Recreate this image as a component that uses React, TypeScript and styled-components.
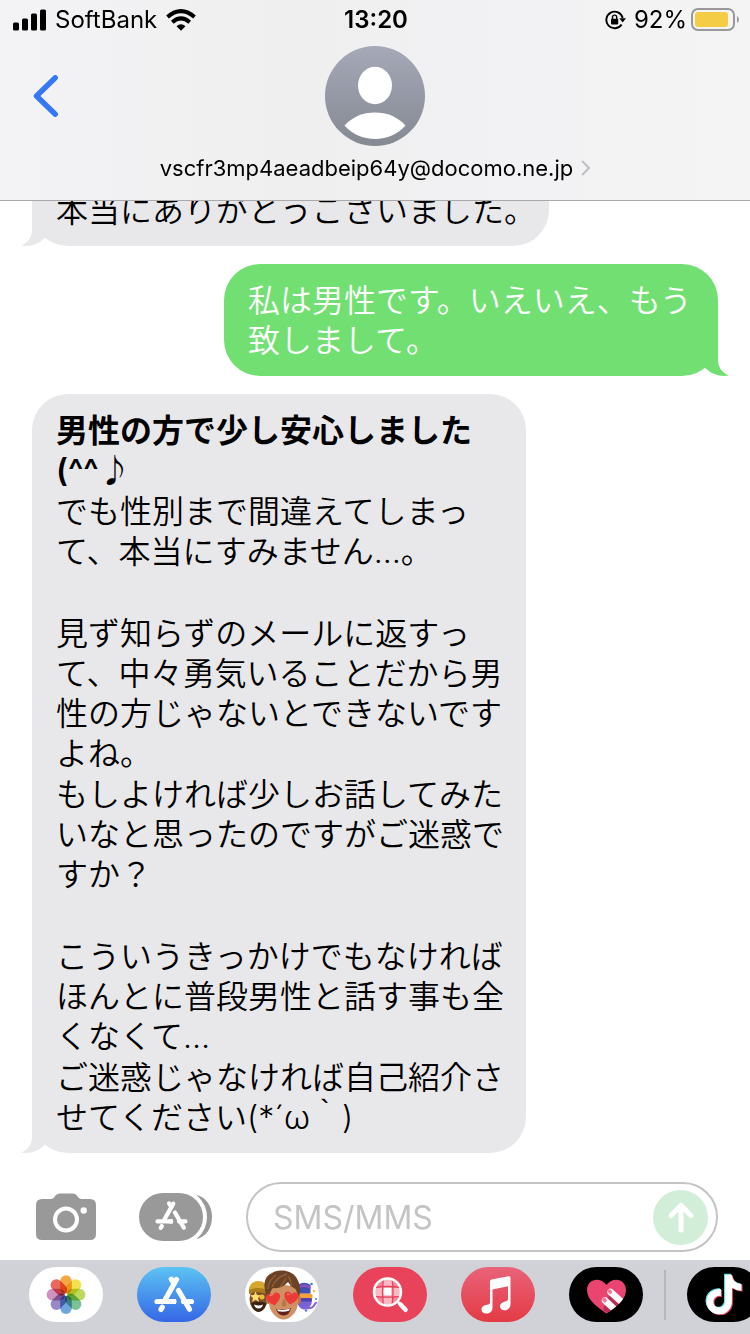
import React from 'react';
import styled, { createGlobalStyle } from 'styled-components';
import { FaTiktok } from 'react-icons/fa';

const GlobalStyle = createGlobalStyle`
  *, *::before, *::after { box-sizing: border-box; }
  body {
    margin: 0;
    background: #fff;
    color: #000;
    font-family: Inter, "Noto Sans CJK JP", sans-serif;
  }
  button { border: 0; padding: 0; background: none; font: inherit; color: inherit; cursor: pointer; }
  svg { display: block; flex: none; }
`;

const Screen = styled.div`
  display: flex;
  flex-direction: column;
  height: 100vh;
  overflow: hidden;
`;

const Header = styled.header`
  flex: none;
  height: 201px;
  border-bottom: 1px solid #a9a9ab;
  background: linear-gradient(90deg, #f3f3f5, #efeff0 40%, #f2f2f4 70%, #f4f4f4);
`;

const StatusBar = styled.div`
  display: grid;
  grid-template-columns: 1fr auto 1fr;
  align-items: center;
  height: 40px;
  padding: 0 11px 0 13px;
  font-size: 24px;
  line-height: 40px;
`;

const StatusGroup = styled.div<{ $end?: boolean }>`
  display: flex;
  align-items: center;
  justify-content: ${(p) => (p.$end ? 'flex-end' : 'flex-start')};
  gap: ${(p) => (p.$end ? 4 : 9)}px;
`;

const Clock = styled.time`
  font-weight: 600;
`;

const LockIcon = styled.svg`
  margin-right: 4px;
`;

const ContactBar = styled.div`
  display: grid;
  grid-template-columns: 1fr auto 1fr;
  align-items: start;
  padding: 6px 33px 0;
`;

const BackButton = styled.button`
  justify-self: start;
  margin-top: 29px;
`;

const Contact = styled.button`
  display: flex;
  flex-direction: column;
  align-items: center;
  gap: 7px;
`;

const ContactName = styled.span`
  display: flex;
  align-items: center;
  gap: 8px;
  font-size: 22px;
  line-height: 30px;
`;

const Thread = styled.main`
  flex: 1;
  min-height: 0;
  overflow: hidden;
  display: flex;
  flex-direction: column;
  justify-content: flex-end;
  gap: 18px;
  padding: 0 32px 29px;
`;

const Bubble = styled.article<{ $sent?: boolean; $wide?: boolean }>`
  position: relative;
  flex: none;
  display: flex;
  flex-direction: column;
  gap: 1px;
  align-self: ${(p) => (p.$sent ? 'flex-end' : 'flex-start')};
  max-width: ${(p) => (p.$wide ? 517 : 494)}px;
  padding: 17px ${(p) => (p.$wide ? 13 : 22)}px 15px 24px;
  border-radius: ${(p) => (p.$wide ? '0 0 36px 36px' : '36px')};
  background: ${(p) => (p.$sent ? '#72df73' : '#e8e8ea')};
  color: ${(p) => (p.$sent ? '#fff' : '#000')};
  font-size: 32px;
  font-weight: 350;
  line-height: 40px;
`;

const Line = styled.p<{ $bold?: boolean }>`
  margin: 0;
  min-height: 40px;
  font-weight: ${(p) => (p.$bold ? 600 : 'inherit')};
`;

const TailShape = styled.svg<{ $sent?: boolean }>`
  position: absolute;
  bottom: 0;
  ${(p) => (p.$sent ? 'right: -11px; transform: scaleX(-1);' : 'left: -11px;')}
  fill: ${(p) => (p.$sent ? '#72df73' : '#e8e8ea')};
`;

const Composer = styled.form`
  flex: none;
  display: flex;
  align-items: center;
  padding: 0 32px 8px 36px;
`;

const CameraButton = styled.button`
  margin-right: 43px;
`;

const AppsButton = styled.button`
  margin-right: 34px;
`;

const Field = styled.div`
  flex: 1;
  min-width: 0;
  display: flex;
  align-items: center;
  height: 70px;
  padding: 0 8px 0 25px;
  border: 2px solid #c4c4c6;
  border-radius: 35px;
`;

const MessageInput = styled.input`
  flex: 1;
  min-width: 0;
  padding: 0;
  border: 0;
  outline: 0;
  background: none;
  font: inherit;
  font-size: 32px;
  &::placeholder { color: #c4c4c6; opacity: 1; }
`;

const SendButton = styled.button`
  flex: none;
  display: grid;
  place-items: center;
  width: 55px;
  height: 55px;
  border-radius: 50%;
  background: #d3eed8;
`;

const AppStrip = styled.nav`
  flex: none;
  display: flex;
  align-items: center;
  height: 74px;
  padding: 0 0 5px 29px;
  background: #d1d2d8;
  overflow: hidden;
`;

const AppGroup = styled.div`
  flex: none;
  display: flex;
  gap: 34px;
`;

const StripDivider = styled.div`
  flex: none;
  width: 2px;
  height: 50px;
  margin: 0 21px;
  background: #b5b5ba;
`;

const AppPill = styled.button<{ $fill: string }>`
  flex: none;
  width: 74px;
  height: 55px;
  border-radius: 28px;
  background: ${(p) => p.$fill};
  overflow: hidden;
`;

const Tail = ({ sent }: { sent?: boolean }) => (
  <TailShape $sent={sent} width="36" height="36" viewBox="0 0 36 36" aria-hidden="true">
    <path d="M11 0V20C11 27 7 33 0 35.6C9 37 18 34 24 27.7L34 10V0Z" />
  </TailShape>
);

const StoreGlyph = () => (
  <g fill="none" stroke="#fff" strokeWidth="5.2" strokeLinecap="round">
    <path d="M39.5 12.5 28.5 32" />
    <path d="M34.3 12.2 37 16.5" />
    <path d="M41.5 23.5 52.5 42.3" />
    <path d="M20 34.5H37M46.5 34.5H54.5" />
    <path d="M34 34.5H39" strokeLinecap="butt" />
    <path d="M25.3 40.2 24 42.4" />
  </g>
);

const petals = ['#f5a136', '#f0df3c', '#b7d650', '#6fbd8c', '#649fdc', '#8f80c0', '#ca8abb', '#e85a4f'];

const PhotosIcon = () => (
  <svg width="74" height="55" viewBox="0 0 74 55">
    <g style={{ isolation: 'isolate' }}>
      {petals.map((color, i) => (
        <rect
          key={color}
          x="31.2"
          y="8.2"
          width="11.6"
          height="18.6"
          rx="5.8"
          fill={color}
          opacity="0.92"
          transform={`rotate(${i * 45} 37 27.6)`}
          style={{ mixBlendMode: 'multiply' }}
        />
      ))}
    </g>
    <circle cx="37" cy="27.6" r="1.3" fill="#fff" />
  </svg>
);

const heart = 'M0 6.5C-4 3.8-7 1-7-2.2C-7-6.5-1.8-7.4 0-3.6C1.8-7.4 7-6.5 7-2.2C7 1 4 3.8 0 6.5Z';

const MemojiIcon = () => (
  <svg width="74" height="55" viewBox="0 0 74 55">
    <ellipse cx="13.5" cy="32" rx="9" ry="12.5" fill="#7d4f2b" />
    <path d="M6 36Q8 45 14 45Q20 44 21 36Q14 33 6 36Z" fill="#3b2415" />
    <path d="M9 37.5Q14 39.5 18 37.5Q17 41.5 13.5 41.5Q10 41.5 9 37.5Z" fill="#fff" />
    <path d="M4 26C3 18 8 14 13 14C19 14 23 18 22 26Q13 22 4 26Z" fill="#d5a72f" />
    <path d="M4 23Q13 19 22 23V27Q13 23.5 4 27Z" fill="#a97d1c" />
    <path d="M10.5 24.5 12 28 16 28.3 13 31 14 35 10.5 32.8 7 35 8 31 5 28.3 9 28Z" fill="#ffdf6b" />
    <circle cx="17" cy="30" r="2.5" fill="#f0bd3a" />
    <ellipse cx="59.5" cy="33" rx="7.5" ry="9.5" fill="#7763d6" />
    <path d="M53 26V18Q59 13.5 65.5 18V26Z" fill="#3e50b4" />
    <path d="M53 19.5Q59 15 65.5 19.5V22Q59 18 53 22Z" fill="#8c4fc2" />
    <rect x="53" y="26.5" width="14.5" height="6" rx="2.5" fill="#f0a23c" />
    <rect x="55" y="31" width="12" height="3.5" rx="1.5" fill="#5140ad" />
    <path d="M60 41Q67 42 69 38.5T72 36" fill="none" stroke="#8a63d8" strokeWidth="2" />
    <circle cx="66.5" cy="17" r="1.3" fill="#4b7be8" />
    <circle cx="69" cy="24" r="1.3" fill="#f2c644" />
    <circle cx="71" cy="32" r="1" fill="#4b7be8" />
    <circle cx="61" cy="43.5" r="1.2" fill="#4b7be8" />
    <ellipse cx="23.5" cy="33" rx="2.5" ry="4" fill="#b97849" />
    <ellipse cx="53.5" cy="33" rx="2.5" ry="4" fill="#b97849" />
    <path d="M24 22Q38 14 53 22V35C53 45 45 52.5 38.5 52.5C32 52.5 24 45 24 35Z" fill="#cf9063" />
    <path d="M38.5 32Q36 38 37 39.5H41Q42 38 40 32Z" fill="#b87649" />
    <path d="M31 42Q38.5 43.5 46 41Q44.5 48.5 38.5 48.5Q33 48.5 31 42Z" fill="#60201c" />
    <path d="M32 42.3Q38.5 43.8 45.2 41.5L44 43.8Q38.5 45.5 33 44.3Z" fill="#fff" />
    <path d="M22 30C18 20 18 10 27 6C36 1 50 4 53 14C56 19 55.5 25 54 30L50.5 22Q46 20 43 15Q37 22 28 21Q25 24 24.5 30Z" fill="#6b4226" />
    <path d="M27 20Q31 10 42 7M35 20Q39 16 41 11M46 20Q47 14 43 9M22.5 22Q24 13 31 8" fill="none" stroke="#8f5e3b" strokeWidth="1.3" />
    <path d={heart} fill="#ec3a36" transform="translate(28.5 32) rotate(-10)" />
    <path d={heart} fill="#ec3a36" transform="translate(46 31) rotate(8)" />
    <path d="M24.5 28.5Q26 27.3 27 29M42 27.5Q43.5 26.3 44.5 28" fill="none" stroke="#ff8d83" strokeWidth="1.2" />
  </svg>
);

const ImagesIcon = () => (
  <svg width="74" height="55" viewBox="0 0 74 55">
    <circle cx="34.5" cy="25" r="12.5" fill="#f58a9b" />
    <path d="M30.5 20.5H38.5V28.5H30.5Z" fill="#fff" />
    <path d="M30 12.5H39V20H30ZM22 20.5H30V29H22ZM39 21H47V29H39ZM30 29.5H39V37H30Z" fill="#fbb9c3" />
    <g fill="none" stroke="#e9405b" strokeWidth="1.3">
      <path d="M30.3 12Q28.5 25 30.3 38M39 12Q41 25 39 38M22 20.5Q34 18.5 47 20.5M22 29.3Q34 31 47 29.3" />
    </g>
    <circle cx="34.5" cy="25" r="13.5" fill="none" stroke="#fff" strokeWidth="2.5" />
    <path d="M44.5 34.5 48 38" stroke="#fff" strokeWidth="2.5" />
    <path d="M47.5 37.5 52.5 42.8" stroke="#fff" strokeWidth="4.5" strokeLinecap="round" />
  </svg>
);

const MusicIcon = () => (
  <svg width="74" height="55" viewBox="0 0 74 55" fill="#fff">
    <path d="M29 14.5Q29 13 30.5 12.6L47.5 9.2Q49.5 8.9 49.5 10.8V37C49.5 41 46.5 43.3 43.3 43.3C40.5 43.3 39 41.5 39 39.3C39 36.5 41.3 35 44.2 34.4C46.3 34 47 33.5 47 31.8V19.2L31.5 22.4V40.5C31.5 44.5 28.5 46.6 25.3 46.6C22.5 46.6 20.5 45 20.5 42.6C20.5 39.8 23 38.4 26 37.8C28.2 37.4 29 36.8 29 35Z" />
  </svg>
);

const FingerHeartIcon = () => (
  <svg width="74" height="55" viewBox="0 0 74 55">
    <defs>
      <clipPath id="heartClip">
        <path d="M37.5 46.5C28 40 18 33 18 23C18 12 31 9 37.5 18C44 9 57 12 57 23C57 33 47 40 37.5 46.5Z" />
      </clipPath>
    </defs>
    <g clipPath="url(#heartClip)">
      <rect x="16" y="10" width="44" height="40" fill="#ea4470" />
      <path d="M37 33 45 24 60 38 44 50 34 43Z" fill="#bd2c55" />
      <g stroke="#fff" strokeWidth="6.5" strokeLinecap="round">
        <path d="M41.5 25 56 38" />
        <path d="M36 33.5 50 46.5" />
      </g>
    </g>
    <g fill="#f27b96">
      <ellipse cx="40.8" cy="24.6" rx="2.6" ry="2" transform="rotate(42 40.8 24.6)" />
      <ellipse cx="35.5" cy="33" rx="2.6" ry="2" transform="rotate(42 35.5 33)" />
    </g>
  </svg>
);

const TikTokIcon = () => (
  <svg width="74" height="55" viewBox="0 0 74 55">
    <FaTiktok x="16" y="6.6" size={40} color="#5fe3df" />
    <FaTiktok x="18" y="8.2" size={40} color="#ee3f5c" />
    <FaTiktok x="17" y="7.4" size={40} color="#fff" />
  </svg>
);

const Status = () => (
  <StatusBar>
    <StatusGroup>
      <svg width="33" height="22" viewBox="0 0 33 22" aria-hidden="true">
        <rect x="0" y="13.5" width="6" height="8" rx="1.5" />
        <rect x="9" y="9.5" width="6" height="12" rx="1.5" />
        <rect x="18" y="4.5" width="6" height="17" rx="1.5" />
        <rect x="27" y="0.5" width="6" height="21" rx="1.5" />
      </svg>
      <span>SoftBank</span>
      <svg width="30" height="22" viewBox="0 0 30 22" aria-hidden="true">
        <g fill="none" stroke="#000" strokeWidth="4">
          <path d="M1.5 8Q15-3.7 28.5 8" />
          <path d="M6.3 13.2Q15 5.5 23.7 13.2" />
        </g>
        <path d="M15 21.7 10.5 17.2Q15 13.5 19.5 17.2Z" />
      </svg>
    </StatusGroup>
    <Clock>13:20</Clock>
    <StatusGroup $end>
      <LockIcon width="21" height="20" viewBox="0 0 21 20" aria-hidden="true">
        <path d="M16.6 14.5A8.3 8.3 0 1 1 17.7 8" fill="none" stroke="#000" strokeWidth="1.9" />
        <path d="M14.3 8.2H21L17.7 12.5Z" />
        <rect x="6" y="8.7" width="7.2" height="5.8" rx="0.8" />
        <path d="M7.5 9V7.2A2.1 2.1 0 0 1 11.7 7.2V9" fill="none" stroke="#000" strokeWidth="1.4" />
      </LockIcon>
      <span>92%</span>
      <svg width="48" height="24" viewBox="0 0 48 24" role="img" aria-label="Battery">
        <rect x="1" y="1" width="42" height="21" rx="6" fill="none" stroke="#98989a" strokeWidth="2" />
        <rect x="4" y="4" width="33" height="15" rx="3" fill="#f5cc45" />
        <path d="M46 8Q48 9.5 48 11.5T46 15Z" fill="#98989a" />
      </svg>
    </StatusGroup>
  </StatusBar>
);

export default function App() {
  return (
    <>
      <GlobalStyle />
      <Screen lang="ja">
        <Header>
          <Status />
          <ContactBar>
            <BackButton aria-label="戻る">
              <svg width="26" height="42" viewBox="0 0 26 42" fill="none" stroke="#3478f6" strokeWidth="5.4" strokeLinecap="round" strokeLinejoin="round">
                <path d="M22.3 2.8 3.5 21 22.3 39.2" />
              </svg>
            </BackButton>
            <Contact>
              <svg width="100" height="100" viewBox="0 0 100 100" aria-hidden="true">
                <defs>
                  <linearGradient id="avatar" x1="0" y1="0" x2="0" y2="1">
                    <stop offset="0" stopColor="#a5a9b8" />
                    <stop offset="1" stopColor="#858992" />
                  </linearGradient>
                </defs>
                <circle cx="50" cy="50" r="50" fill="url(#avatar)" />
                <ellipse cx="50" cy="39.5" rx="17" ry="18.7" fill="#fff" />
                <path d="M19.5 79.5C27 71 38 66.5 50 66.5S73 71 80.5 79.5C73 88 62 93 50 93S27 88 19.5 79.5Z" fill="#fff" />
              </svg>
              <ContactName>
                vscfr3mp4aeadbeip64y@docomo.ne.jp
                <svg width="9" height="16" viewBox="0 0 9 16" fill="none" stroke="#c0c0c3" strokeWidth="2" aria-hidden="true">
                  <path d="M1 1 8 8 1 15" />
                </svg>
              </ContactName>
            </Contact>
          </ContactBar>
        </Header>

        <Thread>
          <Bubble $wide>
            <Line>本当にありがとうございました。</Line>
            <Tail />
          </Bubble>
          <Bubble $sent>
            <Line>私は男性です。いえいえ、もう致しまして。</Line>
            <Tail sent />
          </Bubble>
          <Bubble>
            <Line $bold>
              男性の方で少し安心しました
              <br />
              (^^♪
            </Line>
            <Line>でも性別まで間違えてしまって、本当にすみません…。</Line>
            <Line />
            <Line>見ず知らずのメールに返すって、中々勇気いることだから男性の方じゃないとできないですよね。</Line>
            <Line>もしよければ少しお話してみたいなと思ったのですがご迷惑ですか？</Line>
            <Line />
            <Line>こういうきっかけでもなければほんとに普段男性と話す事も全くなくて…</Line>
            <Line>ご迷惑じゃなければ自己紹介させてください(*´ω｀)</Line>
            <Tail />
          </Bubble>
        </Thread>

        <Composer onSubmit={(e) => e.preventDefault()}>
          <CameraButton type="button" aria-label="カメラ">
            <svg width="60" height="48" viewBox="0 0 60 48">
              <path
                d="M6 6H15Q17 6 18.5 4L20 2Q21.5 0.5 23.5 0.5H37Q39 0.5 40.5 2L42 4Q43.5 6 45.5 6H54Q60 6 60 12V41Q60 47 54 47H6Q0 47 0 41V12Q0 6 6 6Z"
                fill="#999"
              />
              <circle cx="30" cy="26.5" r="11" fill="none" stroke="#fff" strokeWidth="4" />
              <circle cx="47.7" cy="17.5" r="3.2" fill="#fff" />
            </svg>
          </CameraButton>
          <AppsButton type="button" aria-label="アプリ">
            <svg width="73" height="48" viewBox="0 0 73 48">
              <path d="M57.5 2C67 4 73 13 73 24S67 44 57.5 46Z" fill="#999" />
              <rect x="-4" y="-4" width="72" height="56" rx="28" fill="#fff" />
              <rect x="0" y="0" width="64" height="48" rx="24" fill="#999" />
              <g transform="translate(2.3 0.5) scale(0.81)">
                <StoreGlyph />
              </g>
            </svg>
          </AppsButton>
          <Field>
            <MessageInput type="text" placeholder="SMS/MMS" aria-label="SMS/MMS" />
            <SendButton type="submit" aria-label="送信">
              <svg width="26" height="31" viewBox="0 0 26 31" fill="none" stroke="#fff" strokeWidth="5" strokeLinecap="round" strokeLinejoin="round">
                <path d="M13 28V3.5M3 13.5 13 3.5 23 13.5" />
              </svg>
            </SendButton>
          </Field>
        </Composer>

        <AppStrip aria-label="アプリ">
          <AppGroup>
            <AppPill $fill="#fff" aria-label="写真"><PhotosIcon /></AppPill>
            <AppPill $fill="linear-gradient(#5cc3f3, #3567e6)" aria-label="App Store">
              <svg width="74" height="55" viewBox="0 0 74 55"><StoreGlyph /></svg>
            </AppPill>
            <AppPill $fill="#fff" aria-label="ミー文字"><MemojiIcon /></AppPill>
            <AppPill $fill="#e9435b" aria-label="画像"><ImagesIcon /></AppPill>
            <AppPill $fill="linear-gradient(#e9637a, #e33b45)" aria-label="ミュージック"><MusicIcon /></AppPill>
            <AppPill $fill="#000" aria-label="Digital Touch"><FingerHeartIcon /></AppPill>
          </AppGroup>
          <StripDivider />
          <AppPill $fill="#000" aria-label="TikTok"><TikTokIcon /></AppPill>
        </AppStrip>
      </Screen>
    </>
  );
}
